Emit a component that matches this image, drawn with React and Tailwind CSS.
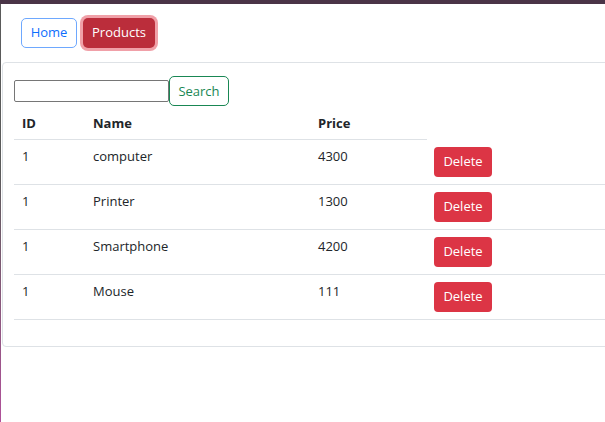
const products = [
  { id: 1, name: "computer", price: 4300 },
  { id: 1, name: "Printer", price: 1300 },
  { id: 1, name: "Smartphone", price: 4200 },
  { id: 1, name: "Mouse", price: 111 },
];

function App() {
  return (
    <div className="flex h-[422px] w-[605px] flex-col overflow-hidden bg-white font-['Open_Sans',sans-serif] text-[13px] text-[#212529]">
      <div className="h-[4px] w-full shrink-0 bg-[#4a3447]" />
      <div className="flex flex-1">
        <div className="w-px shrink-0 bg-gradient-to-b from-[#5a5a5a] via-[#5a5a5a] via-40% to-[#b0509a]" />
        <div className="flex-1">
          <nav className="flex gap-[6px] pl-[20px] pt-[14px]">
            <button className="h-[30px] w-[56px] rounded-[5px] border border-[#6ea8fe] text-[#0d6efd]">
              Home
            </button>
            <button className="h-[30px] w-[72px] rounded-[5px] bg-[#bb2d3b] text-white ring-[3px] ring-[#f0a0a8]">
              Products
            </button>
          </nav>

          <div className="ml-px mt-[14px] w-[640px] rounded-[4px] border border-[#dee2e6] px-[11px] pb-[13px] pt-[13px]">
            <div className="flex items-center">
              <input className="h-[22px] w-[155px] rounded-[2px] border border-[#767676]" />
              <button className="h-[30px] w-[60px] rounded-[5px] border border-[#198754] pt-[2px] text-[#198754]">
                Search
              </button>
            </div>

            <table className="mb-[13px] mt-px w-full border-collapse text-left leading-[19px]">
              <thead>
                <tr>
                  <th className="w-[71px] border-b border-[#dee2e6] px-[8px] pb-[6px] pt-[7px] font-bold">ID</th>
                  <th className="w-[225px] border-b border-[#dee2e6] px-[8px] pb-[6px] pt-[7px] font-bold">Name</th>
                  <th className="w-[117px] border-b border-[#dee2e6] px-[8px] pb-[6px] pt-[7px] font-bold">Price</th>
                </tr>
              </thead>
              <tbody>
                {products.map((p, i) => (
                  <tr key={i} className="border-b border-[#dee2e6] align-top">
                    <td className="px-[8px] py-[7px]">{p.id}</td>
                    <td className="px-[8px] py-[7px]">{p.name}</td>
                    <td className="px-[8px] py-[7px]">{p.price}</td>
                    <td className="px-[7px] py-[7px]">
                      <button className="block h-[30px] w-[58px] rounded-[4px] bg-[#dc3545] text-white">
                        Delete
                      </button>
                    </td>
                  </tr>
                ))}
              </tbody>
            </table>
          </div>
        </div>
      </div>
    </div>
  );
}

export default App;
